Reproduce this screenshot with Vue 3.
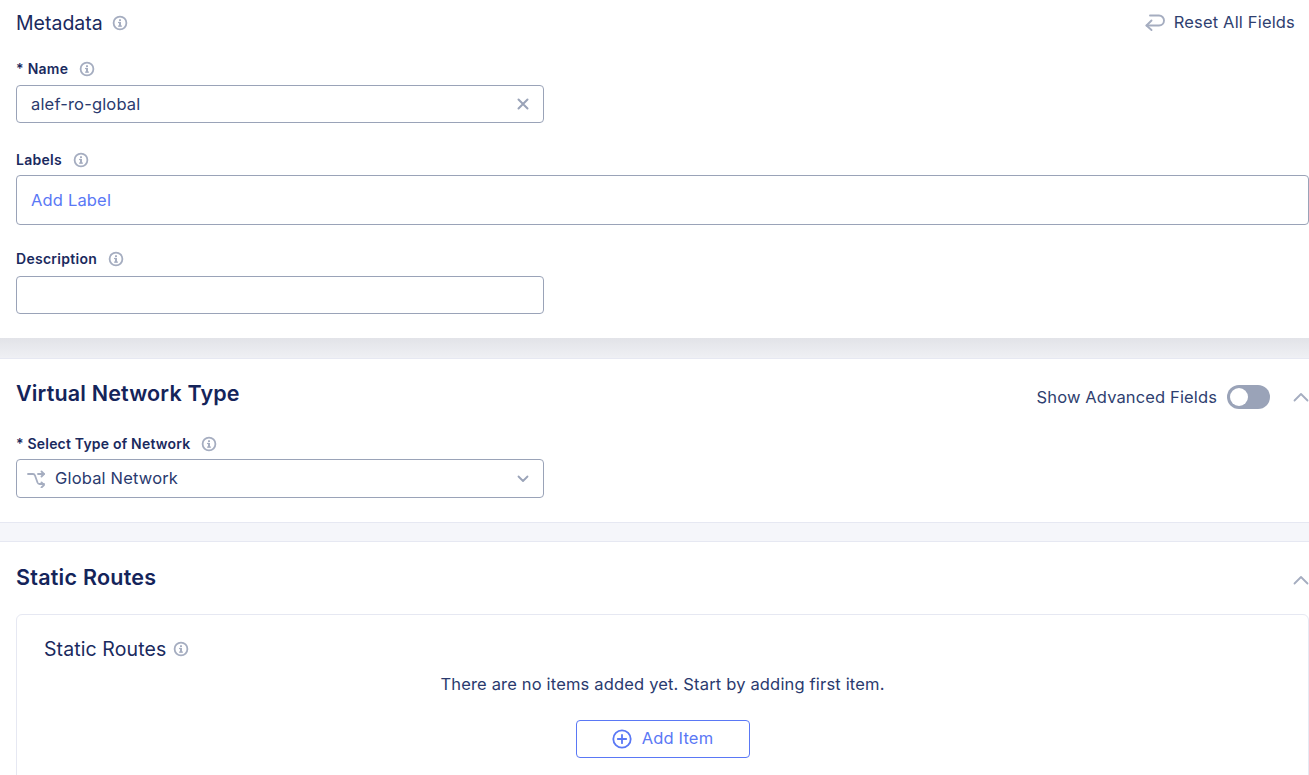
<template>
  <div class="page">
    <section class="panel meta">
      <div class="meta-head">
        <div class="meta-title">
          <span>Metadata</span>
          <svg class="info" viewBox="0 0 16 16"><use href="#info-ic" /></svg>
        </div>
        <div class="reset">
          <svg class="reset-ic" viewBox="0 0 20 18" fill="none" stroke="#a5adc0" stroke-width="1.900" stroke-linecap="round" stroke-linejoin="round">
            <path d="M6.500 6.500 1.500 11.500 6.500 16" />
            <path d="M1.500 11.500H14a5 5 0 0 0 0-10H5" />
          </svg>
          <span class="reset-text">Reset All Fields</span>
        </div>
      </div>

      <div class="label name-label">
        <span>* Name</span>
        <svg class="info" viewBox="0 0 16 16"><use href="#info-ic" /></svg>
      </div>
      <div class="input half">
        <span>alef-ro-global</span>
        <svg class="clear" viewBox="0 0 12 12" stroke="#9aa3b8" stroke-width="2" stroke-linecap="round"><path d="M1.500 1.500l9 9M10.500 1.500l-9 9" /></svg>
      </div>

      <div class="label labels-label">
        <span>Labels</span>
        <svg class="info" viewBox="0 0 16 16"><use href="#info-ic" /></svg>
      </div>
      <div class="input wide"><span class="add-label">Add Label</span></div>

      <div class="label desc-label">
        <span>Description</span>
        <svg class="info" viewBox="0 0 16 16"><use href="#info-ic" /></svg>
      </div>
      <div class="input half"></div>
    </section>

    <div class="gap shaded"></div>

    <section class="panel network">
      <div class="sec-head">
        <h2 class="network-title">Virtual Network Type</h2>
        <div class="sec-actions">
          <span class="adv">Show Advanced Fields</span>
          <span class="toggle"><span class="knob"></span></span>
          <svg class="chev" viewBox="0 0 16 10" fill="none" stroke="#a5adc0" stroke-width="1.800" stroke-linecap="round" stroke-linejoin="round"><path d="M1.500 8.500 8 2l6.500 6.500" /></svg>
        </div>
      </div>
      <div class="label type-label">
        <span>* Select Type of Network</span>
        <svg class="info" viewBox="0 0 16 16"><use href="#info-ic" /></svg>
      </div>
      <div class="input half select">
        <svg class="net-ic" viewBox="0 0 18 18" fill="none" stroke="#a5adc0" stroke-width="1.800" stroke-linecap="round" stroke-linejoin="round">
          <path d="M1 4h5c1 0 1.600.5 2 1.500l2.500 7c.4 1 1 1.500 2 1.500H17" />
          <path d="M11 4h6" />
          <path d="M14.500 1.500 17 4l-2.500 2.500M14.500 12.500 17 15l-2.500 2.500" />
        </svg>
        <span class="sel-text">Global Network</span>
        <svg class="sel-chev" viewBox="0 0 12 8" fill="none" stroke="#9aa3b8" stroke-width="1.800" stroke-linecap="round" stroke-linejoin="round"><path d="M1.500 1.500 6 6l4.500-4.500" /></svg>
      </div>
    </section>

    <div class="gap"></div>

    <section class="panel routes">
      <div class="sec-head routes-head">
        <h2 class="routes-title">Static Routes</h2>
        <svg class="chev routes-chev" viewBox="0 0 16 10" fill="none" stroke="#a5adc0" stroke-width="1.800" stroke-linecap="round" stroke-linejoin="round"><path d="M1.500 8.500 8 2l6.500 6.500" /></svg>
      </div>
      <div class="card">
        <div class="card-title">
          <span>Static Routes</span>
          <svg class="info" viewBox="0 0 16 16"><use href="#info-ic" /></svg>
        </div>
        <p class="empty">There are no items added yet. Start by adding first item.</p>
        <button class="add-btn" type="button">
          <svg viewBox="0 0 20 20" fill="none" stroke="#5a78f5" stroke-width="1.800" stroke-linecap="round"><circle cx="10" cy="10" r="8.700" /><path d="M10 5.800v8.400M5.800 10h8.400" /></svg>
          <span class="add-text">Add Item</span>
        </button>
      </div>
    </section>

    <!-- info icon shared by all the labels -->
    <svg width="0" height="0" class="defs">
      <symbol id="info-ic" viewBox="0 0 16 16">
        <circle cx="8" cy="8" r="6.400" fill="none" stroke="currentColor" stroke-width="1.800" />
        <rect x="7" y="6.900" width="2" height="4.600" fill="currentColor" />
        <rect x="6" y="6.900" width="2" height="1.200" fill="currentColor" />
        <rect x="6" y="10.500" width="4" height="1.200" fill="currentColor" />
        <rect x="7" y="4.300" width="2" height="1.700" fill="currentColor" />
      </symbol>
    </svg>
  </div>
</template>

<script setup>
</script>

<style>
html, body {
  margin: 0;
  background: #fff;
  overflow: hidden;
}
</style>

<style scoped>
.page {
  width: 1309px;
  height: 775px;
  overflow: hidden;
  font-family: Inter, "Liberation Sans", sans-serif;
  letter-spacing: 0.17px;
  color: #1a2a5e;
  background: #fff;
}

.panel {
  background: #fff;
}

.meta {
  height: 338px;
  box-sizing: border-box;
  padding: 0 0 0 16px;
}

.meta-head {
  display: flex;
  justify-content: space-between;
  align-items: center;
  height: 46px;
  padding-right: 14px;
}

.meta-title {
  display: flex;
  align-items: center;
  gap: 9px;
  font-size: 19.5px;
  letter-spacing: 0;
}

.reset {
  display: flex;
  align-items: center;
  gap: 9px;
  font-size: 16.5px;
  color: #2f3f70;
}

.reset-text {
  margin-top: -2px;
}

.reset-ic {
  width: 20px;
  height: 18px;
}

.info {
  width: 16px;
  height: 16px;
  color: #a5adc0;
  flex: none;
}

.label {
  display: flex;
  align-items: center;
  gap: 11px;
  font-size: 14px;
  font-weight: 600;
  line-height: 16px;
  letter-spacing: 0.28px;
}

.name-label {
  margin-top: 15px;
  height: 16px;
}

.labels-label {
  margin-top: 29px;
}

.desc-label {
  margin-top: 26px;
}

.input {
  box-sizing: border-box;
  border: 1px solid #9aa3b8;
  border-radius: 4px;
  height: 38px;
  display: flex;
  align-items: center;
  padding: 0 14px;
  font-size: 16.5px;
  color: #2a3a6e;
}

.name-label + .input {
  margin-top: 8px;
}

.labels-label + .input {
  margin-top: 7px;
}

.desc-label + .input {
  margin-top: 9px;
}

.half {
  width: 528px;
  justify-content: space-between;
}

.wide {
  height: 50px;
  width: 1293px;
}

.add-label {
  color: #5a78f5;
}

.clear {
  width: 12px;
  height: 12px;
}

.gap {
  height: 20px;
  box-sizing: border-box;
  background: #f5f6fa;
  border-top: 1px solid #e6e8f2;
  border-bottom: 1px solid #e6e8f2;
}

.shaded {
  height: 21px;
  border-top: 0;
  background: linear-gradient(#e2e3e8, #eff0f4);
}

.network {
  height: 163px;
  box-sizing: border-box;
  padding: 0 0 0 16px;
}

.sec-head {
  display: flex;
  justify-content: space-between;
  align-items: center;
  height: 69px;
}

h2 {
  margin: 0;
  font-size: 21.5px;
  font-weight: 600;
  letter-spacing: 0.17px;
  color: #14245a;
}

.network-title {
  margin-top: -2px;
}

.routes-title {
  margin-top: -2px;
  letter-spacing: 0.25px;
}

.sec-actions {
  display: flex;
  align-items: center;
  margin-top: 7px;
}

.adv {
  font-size: 16.5px;
  letter-spacing: 0.13px;
  color: #2f3f70;
  margin-right: 10px;
}

.toggle {
  width: 43px;
  height: 24px;
  border-radius: 12px;
  background: #9aa3b8;
  display: flex;
  align-items: center;
  padding-left: 3px;
  box-sizing: border-box;
  margin-right: 23px;
}

.knob {
  width: 18px;
  height: 18px;
  border-radius: 50%;
  background: #fff;
}

.chev {
  width: 16px;
  height: 10px;
  flex: none;
}

.type-label {
  margin-top: 8px;
  letter-spacing: 0.2px;
}

.select {
  margin-top: 7px;
  justify-content: flex-start;
  height: 39px;
}

.net-ic {
  width: 18px;
  height: 18px;
  margin-left: -4px;
  margin-right: 3px;
}

.sel-text {
  margin-left: 7px;
  margin-top: -1px;
  flex: 1;
}

.sel-chev {
  width: 12px;
  height: 8px;
}

.routes {
  padding-left: 16px;
}

.routes-head {
  height: 72px;
}

.routes-chev {
  margin-top: 4px;
}

.card {
  box-sizing: border-box;
  width: 1293px;
  height: 240px;
  border: 1px solid #e6e8f2;
  border-radius: 6px;
  padding: 0 27px;
  display: flex;
  flex-direction: column;
  align-items: center;
}

.card-title {
  align-self: flex-start;
  display: flex;
  align-items: center;
  gap: 7px;
  font-size: 19.5px;
  letter-spacing: 0.1px;
  margin-top: 22px;
}

.empty {
  margin: 13px 0 0;
  font-size: 16.5px;
  color: #2a3a6e;
}

.add-btn {
  margin-top: 26px;
  width: 174px;
  height: 38px;
  border: 1px solid #5a78f5;
  border-radius: 4px;
  background: #fff;
  color: #5a78f5;
  font: inherit;
  font-size: 16.5px;
  letter-spacing: 0.17px;
  display: flex;
  align-items: center;
  justify-content: center;
  gap: 10px;
}

.add-text {
  margin-top: -2px;
}

.add-btn svg {
  width: 20px;
  height: 20px;
}

.defs {
  position: absolute;
}
</style>
